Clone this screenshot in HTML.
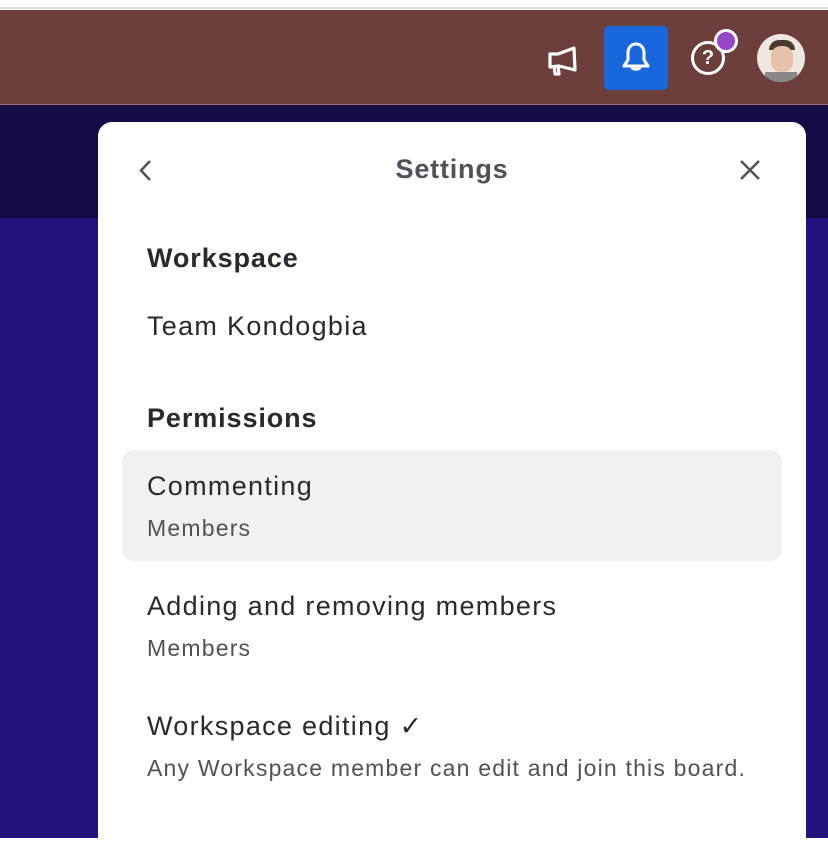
<!DOCTYPE html>
<html><head><style>
*{margin:0;padding:0;box-sizing:border-box}
body{width:828px;height:838px;overflow:hidden;position:relative;font-family:"Liberation Sans",sans-serif;background:#fff}
.top{position:absolute;left:0;top:0;width:828px;height:9px;background:#fff;border-bottom:2px solid #ddd}
.hdr{position:absolute;left:0;top:10px;width:828px;height:95px;background:#6d3f3c;border-bottom:1px solid #9a6f6a}
.dark{position:absolute;left:0;top:105px;width:828px;height:113px;background:#160c45}
.purple{position:absolute;left:0;top:218px;width:828px;height:620px;background:#22147f}
.panel{position:absolute;left:98px;top:122px;width:708px;height:740px;background:#fff;border-radius:14px}
.t{position:absolute;left:147px;color:#292a2e;white-space:nowrap}
.h{font-weight:bold;font-size:27px;letter-spacing:0.9px}
.n{font-size:27px;letter-spacing:1.3px}
.s{font-size:23px;color:#505258;letter-spacing:1.2px}
.hl{position:absolute;left:122px;top:450px;width:660px;height:111px;background:#f0f1f3;border-radius:12px}
</style></head><body>
<div class="top"></div>
<div class="hdr"></div>
<div class="dark"></div>
<div class="purple"></div>
<svg style="position:absolute;left:547px;top:44px" width="36" height="34" viewBox="0 0 36 34" fill="none" stroke="#fff" stroke-width="3.2" stroke-linejoin="round"><path d="M3 10l8 0 16-6 1 22-16-4-9 1z"/><path d="M7 21l1 9h4l-1-9"/></svg>
<div style="position:absolute;left:604px;top:26px;width:64px;height:64px;background:#1868db;border-radius:5px"></div>
<svg style="position:absolute;left:618px;top:40px" width="36" height="36" viewBox="0 0 36 36" fill="none" stroke="#fff" stroke-width="3" stroke-linejoin="round"><path d="M18 4c-5 0-8 4-8 9v7l-4 6h24l-4-6v-7c0-5-3-9-8-9z"/><path d="M14 27c0 3 8 3 8 0"/></svg>
<div style="position:absolute;left:691px;top:41px;width:34px;height:34px;border:3px solid #fff;border-radius:50%;color:#fff;font-weight:bold;font-size:20px;text-align:center;line-height:28px">?</div>
<div style="position:absolute;left:714px;top:29px;width:24px;height:24px;background:#9646c6;border:3px solid #fff;border-radius:50%"></div>
<div style="position:absolute;left:757px;top:34px;width:48px;height:48px;border-radius:50%;background:#f0e6e0;overflow:hidden"><div style="position:absolute;left:12px;top:6px;width:26px;height:10px;background:#4a3a30;border-radius:10px 10px 0 0"></div><div style="position:absolute;left:14px;top:12px;width:22px;height:26px;background:#e6c2a8;border-radius:10px"></div><div style="position:absolute;left:8px;top:38px;width:32px;height:12px;background:#888"></div></div>
<div class="panel"></div>
<svg style="position:absolute;left:136px;top:158px" width="20" height="26" viewBox="0 0 20 26" fill="none" stroke="#505258" stroke-width="2.5"><path d="M14 3L5 12.5 14 22"/></svg>
<div style="position:absolute;left:98px;top:154px;width:708px;text-align:center;font-size:27px;font-weight:bold;color:#505258;letter-spacing:0.8px">Settings</div>
<svg style="position:absolute;left:738px;top:158px" width="24" height="24" viewBox="0 0 24 24" stroke="#505258" stroke-width="2.5"><path d="M3 3l18 18M21 3L3 21"/></svg>
<div class="t h" style="top:243px">Workspace</div>
<div class="t n" style="top:311px">Team Kondogbia</div>
<div class="t h" style="top:403px">Permissions</div>
<div class="hl"></div>
<div class="t n" style="top:471px">Commenting</div>
<div class="t s" style="top:515px">Members</div>
<div class="t n" style="top:591px">Adding and removing members</div>
<div class="t s" style="top:635px">Members</div>
<div class="t n" style="top:711px">Workspace editing ✓</div>
<div class="t s" style="top:755px">Any Workspace member can edit and join this board.</div>
</body></html>
